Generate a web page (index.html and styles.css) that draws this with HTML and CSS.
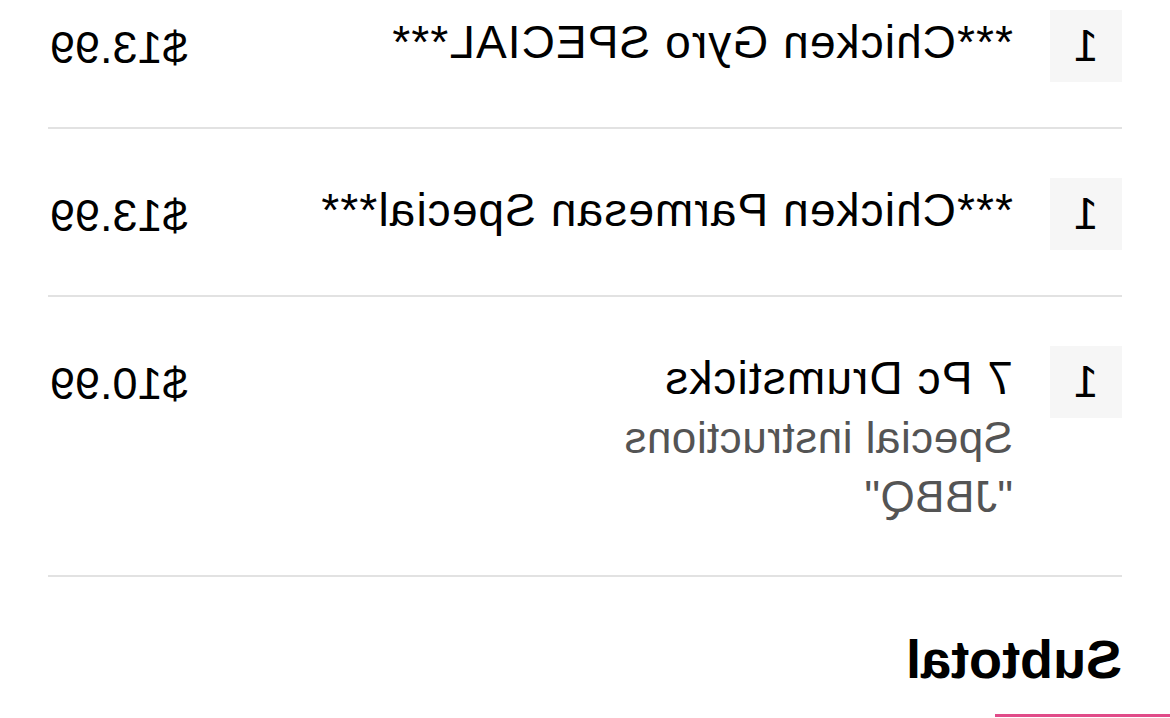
FILE: index.html
```html
<!DOCTYPE html>
<html>

<head>
    <title>
        Order summary
    </title>
    <link rel="stylesheet" href="styles.css">
</head>

<body>
    <div class="mirror">
        <div class="receipt">
            <div class="item">
                <div class="qty">1</div>
                <div class="info">
                    <div class="name">***Chicken Gyro SPECIAL***</div>
                </div>
                <div class="price">$13.99</div>
            </div>
            <div class="item">
                <div class="qty">1</div>
                <div class="info">
                    <div class="name">***Chicken Parmesan Special***</div>
                </div>
                <div class="price">$13.99</div>
            </div>
            <div class="item item-notes">
                <div class="qty">1</div>
                <div class="info">
                    <div class="name">7 Pc Drumsticks</div>
                    <div class="note">Special instructions</div>
                    <div class="note">"JBBQ"</div>
                </div>
                <div class="price">$10.99</div>
            </div>
            <h2 class="subtotal">Subtotal</h2>
            <div class="checkout"></div>
        </div>
    </div>
</body>

</html>
```

FILE: styles.css
```css
html,
body {
    margin: 0;
    background: #fff;
    overflow: hidden;
}

body {
    width: 1170px;
    height: 718px;
    font-family: "Liberation Sans", Arial, sans-serif;
    color: #000;
}

/* the screenshot is a mirrored capture */
.mirror {
    transform: scaleX(-1);
}

.receipt {
    padding: 0 48px;
    margin-top: -39px;
}

.item {
    display: flex;
    align-items: flex-start;
    padding: 49px 0 45px;
    border-bottom: 2px solid #e2e2e2;
}

.item-notes {
    padding-bottom: 49px;
}

.qty {
    width: 72px;
    height: 72px;
    flex: none;
    background-color: #f6f6f6;
    font-size: 44px;
    line-height: 72px;
    text-align: center;
}

.info {
    flex: 1;
    margin-left: 37px;
    padding-top: 2px;
}

.name {
    font-size: 46px;
    line-height: 60px;
    letter-spacing: 1.1px;
}

.note {
    font-size: 44px;
    line-height: 59px;
    letter-spacing: 0.5px;
    color: #545454;
}

.price {
    font-size: 45px;
    line-height: 60px;
    padding-top: 8px;
    margin-right: 2px;
}

.subtotal {
    margin: 51px 0 0;
    font-size: 54px;
    line-height: 62px;
    font-weight: bold;
}

/* top edge of the checkout button, cut off by the frame */
.checkout {
    width: 175px;
    height: 3px;
    margin: 24px 0 0 -48px;
    background-color: #e14b89;
}
```
